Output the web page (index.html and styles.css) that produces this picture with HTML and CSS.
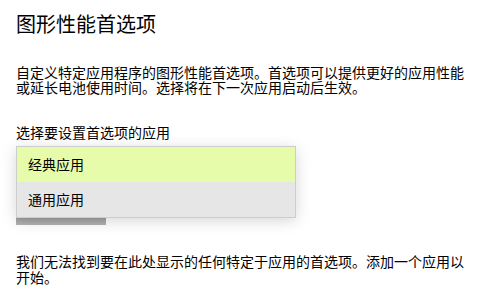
FILE: index.html
```html
<!DOCTYPE html>
<html lang="zh-CN">
<head>
<meta charset="utf-8">
<link rel="stylesheet" href="styles.css">
</head>
<body>
<main class="page">
  <h1 class="title">图形性能首选项</h1>
  <p class="desc">自定义特定应用程序的图形性能首选项。首选项可以提供更好的应用性能或延长电池使用时间。选择将在下一次应用启动后生效。</p>
  <div class="label">选择要设置首选项的应用</div>
  <div class="combo">
    <ul class="menu">
      <li class="item item-selected">经典应用</li>
      <li class="item">通用应用</li>
    </ul>
    <div class="combo-bar"></div>
  </div>
  <p class="empty">我们无法找到要在此处显示的任何特定于应用的首选项。添加一个应用以开始。</p>
</main>
</body>
</html>
```

FILE: styles.css
```css
html, body {
  margin: 0;
  padding: 0;
  background: #ffffff;
}

body {
  font-family: "Noto Sans CJK SC", "Noto Sans", sans-serif;
  color: #000000;
  width: 486px;
  height: 297px;
  overflow: hidden;
}

.page {
  padding: 10px 16px 0 16px;
  display: flex;
  flex-direction: column;
}

.title {
  margin: 0;
  font-size: 20px;
  font-weight: 400;
  line-height: 28px;
  letter-spacing: 0;
}

.desc {
  margin: 27px 0 0 0;
  font-size: 14px;
  line-height: 15px;
  width: 460px;
}

.label {
  margin-top: 29px;
  font-size: 14px;
  line-height: 16px;
}

.combo {
  margin-top: 6px;
  display: flex;
  flex-direction: column;
}

.menu {
  list-style: none;
  margin: 0;
  padding: 0;
  width: 278px;
  border: 1px solid #cdcdcd;
  background: #e6e6e6;
  box-shadow: 0 3px 14px rgba(0, 0, 0, 0.16);
  position: relative;
  z-index: 1;
}

.item {
  height: 35px;
  padding-left: 11px;
  font-size: 14px;
  line-height: 35px;
  background: #e6e6e6;
}

.item-selected {
  background: #e6fcaa;
}

.combo-bar {
  width: 90px;
  height: 7px;
  background: linear-gradient(#9f9f9f, #b4b4b4);
}

.empty {
  margin: 28px 0 0 0;
  font-size: 14px;
  line-height: 16px;
  width: 460px;
}
```
